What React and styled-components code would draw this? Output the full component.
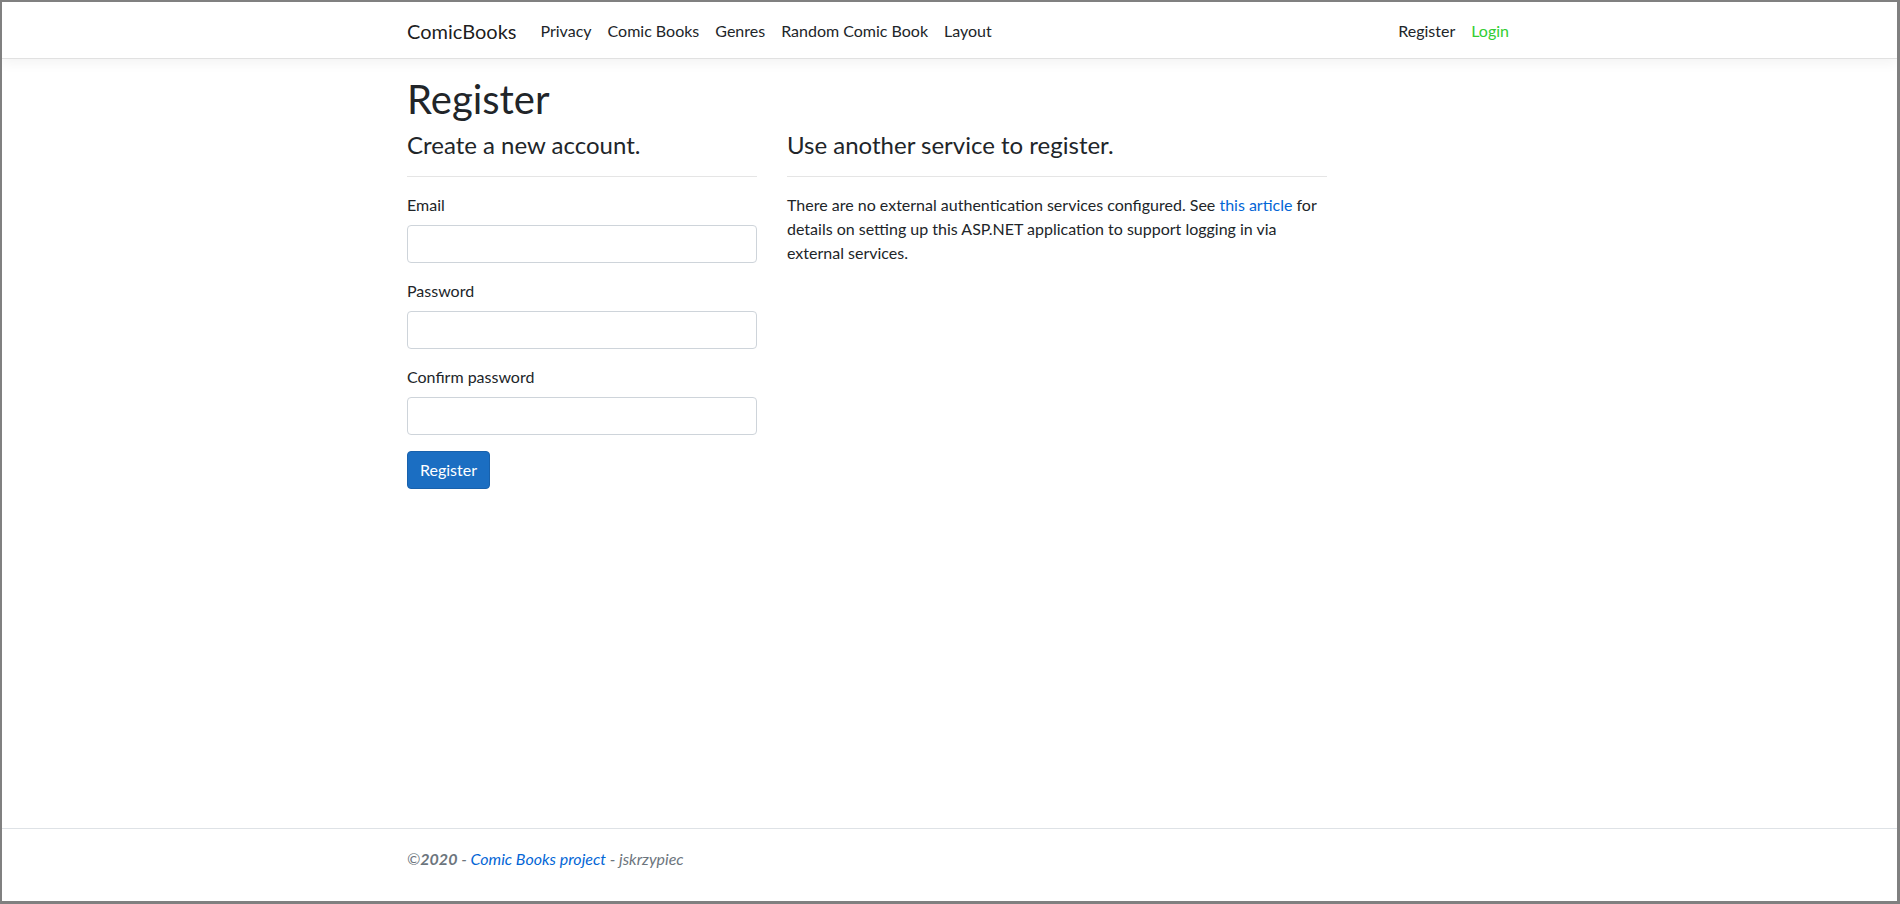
import React from "react";
import styled, { createGlobalStyle } from "styled-components";

const GlobalStyle = createGlobalStyle`
  html, body { margin: 0; padding: 0; }
  body {
    font-family: "Lato", "Noto Sans", sans-serif;
    font-size: 16px;
    line-height: 1.5;
    color: #212529;
    background: #ffffff;
  }
  *, *::before, *::after { box-sizing: border-box; }
`;

const Frame = styled.div`
  width: 1900px;
  height: 904px;
  border-style: solid;
  border-color: #808080;
  border-width: 2px 3px 3px 2px;
  display: flex;
  flex-direction: column;
  background: #fff;
  overflow: hidden;
`;

const Container = styled.div`
  width: 1140px;
  margin-left: 390px;
  padding: 0 15px;
`;

const Navbar = styled.nav`
  position: relative;
  z-index: 1;
  background: #fff;
  border-bottom: 1px solid #e1e1e1;
  box-shadow: 0 0.25rem 0.75rem rgba(0, 0, 0, 0.05);
  padding: 8px 0;
  margin-bottom: 16px;
`;

const NavInner = styled(Container)`
  display: flex;
  align-items: center;
`;

const Brand = styled.a`
  font-size: 20px;
  line-height: 30px;
  padding: 6px 0 4px;
  margin-right: 16px;
  color: rgba(0, 0, 0, 0.9);
  text-decoration: none;
  white-space: nowrap;
`;

const NavList = styled.ul`
  display: flex;
  list-style: none;
  margin: 0;
  padding: 0;
  flex: ${(p) => (p.$grow ? 1 : "none")};
`;

const NavLink = styled.a`
  display: block;
  padding: 9px 8px 7px;
  line-height: 24px;
  color: ${(p) => (p.$green ? "#32cd32" : "#212529")};
  text-decoration: none;
  white-space: nowrap;
`;

const Main = styled.main`
  flex: 1;
  padding-bottom: 16px;
`;

const Title = styled.h1`
  margin: 0 0 8px;
  font-size: 40px;
  line-height: 48px;
  font-weight: 400;
`;

const Columns = styled.div`
  display: grid;
  grid-template-columns: 350px 540px;
  column-gap: 30px;
  align-items: start;
`;

const SubTitle = styled.h4`
  margin: 0 0 8px;
  font-size: 24px;
  line-height: 28.8px;
  font-weight: 400;
`;

const Rule = styled.hr`
  margin: 16px 0;
  border: 0;
  border-top: 1px solid rgba(0, 0, 0, 0.1);
  height: 0;
`;

const FormGroup = styled.div`
  margin-bottom: 16px;
`;

const Label = styled.label`
  display: inline-block;
  margin-bottom: 8px;
  line-height: 24px;
`;

const Input = styled.input`
  display: block;
  width: 100%;
  height: 38px;
  padding: 6px 12px;
  font-family: inherit;
  font-size: 16px;
  line-height: 24px;
  color: #495057;
  background: #fff;
  border: 1px solid #ced4da;
  border-radius: 4px;
  outline: none;
`;

const Button = styled.button`
  display: inline-block;
  height: 38px;
  padding: 6px 12px;
  font-family: inherit;
  font-size: 16px;
  line-height: 24px;
  color: #fff;
  background: #1b6ec2;
  border: 1px solid #1861ac;
  border-radius: 4px;
  cursor: pointer;
`;

const Paragraph = styled.p`
  margin: 0 0 16px;
  line-height: 24px;
`;

const Link = styled.a`
  color: #0366d6;
  text-decoration: none;
`;

const Footer = styled.footer`
  border-top: 1px solid #dee2e6;
  padding-bottom: 12px;
  line-height: 60px;
  white-space: nowrap;
  color: #6c757d;
  font-style: italic;
`;

export default function App() {
  return (
    <>
      <GlobalStyle />
      <Frame>
        <Navbar>
          <NavInner>
            <Brand href="#">ComicBooks</Brand>
            <NavList $grow>
              <li><NavLink href="#">Privacy</NavLink></li>
              <li><NavLink href="#">Comic Books</NavLink></li>
              <li><NavLink href="#">Genres</NavLink></li>
              <li><NavLink href="#">Random Comic Book</NavLink></li>
              <li><NavLink href="#">Layout</NavLink></li>
            </NavList>
            <NavList>
              <li><NavLink href="#">Register</NavLink></li>
              <li><NavLink href="#" $green>Login</NavLink></li>
            </NavList>
          </NavInner>
        </Navbar>

        <Main>
          <Container>
            <Title>Register</Title>
            <Columns>
              <form onSubmit={(e) => e.preventDefault()}>
                <SubTitle>Create a new account.</SubTitle>
                <Rule />
                <FormGroup>
                  <Label htmlFor="email">Email</Label>
                  <Input id="email" type="email" />
                </FormGroup>
                <FormGroup>
                  <Label htmlFor="password">Password</Label>
                  <Input id="password" type="password" />
                </FormGroup>
                <FormGroup>
                  <Label htmlFor="confirm">Confirm password</Label>
                  <Input id="confirm" type="password" />
                </FormGroup>
                <Button type="submit">Register</Button>
              </form>
              <section>
                <SubTitle>Use another service to register.</SubTitle>
                <Rule />
                <Paragraph>
                  There are no external authentication services configured. See{" "}
                  <Link href="#">this article</Link> for details on setting up this
                  ASP.NET application to support logging in via external services.
                </Paragraph>
              </section>
            </Columns>
          </Container>
        </Main>

        <Footer>
          <Container>
            ©<b>2020</b> - <Link href="#">Comic Books project</Link> - jskrzypiec
          </Container>
        </Footer>
      </Frame>
    </>
  );
}
